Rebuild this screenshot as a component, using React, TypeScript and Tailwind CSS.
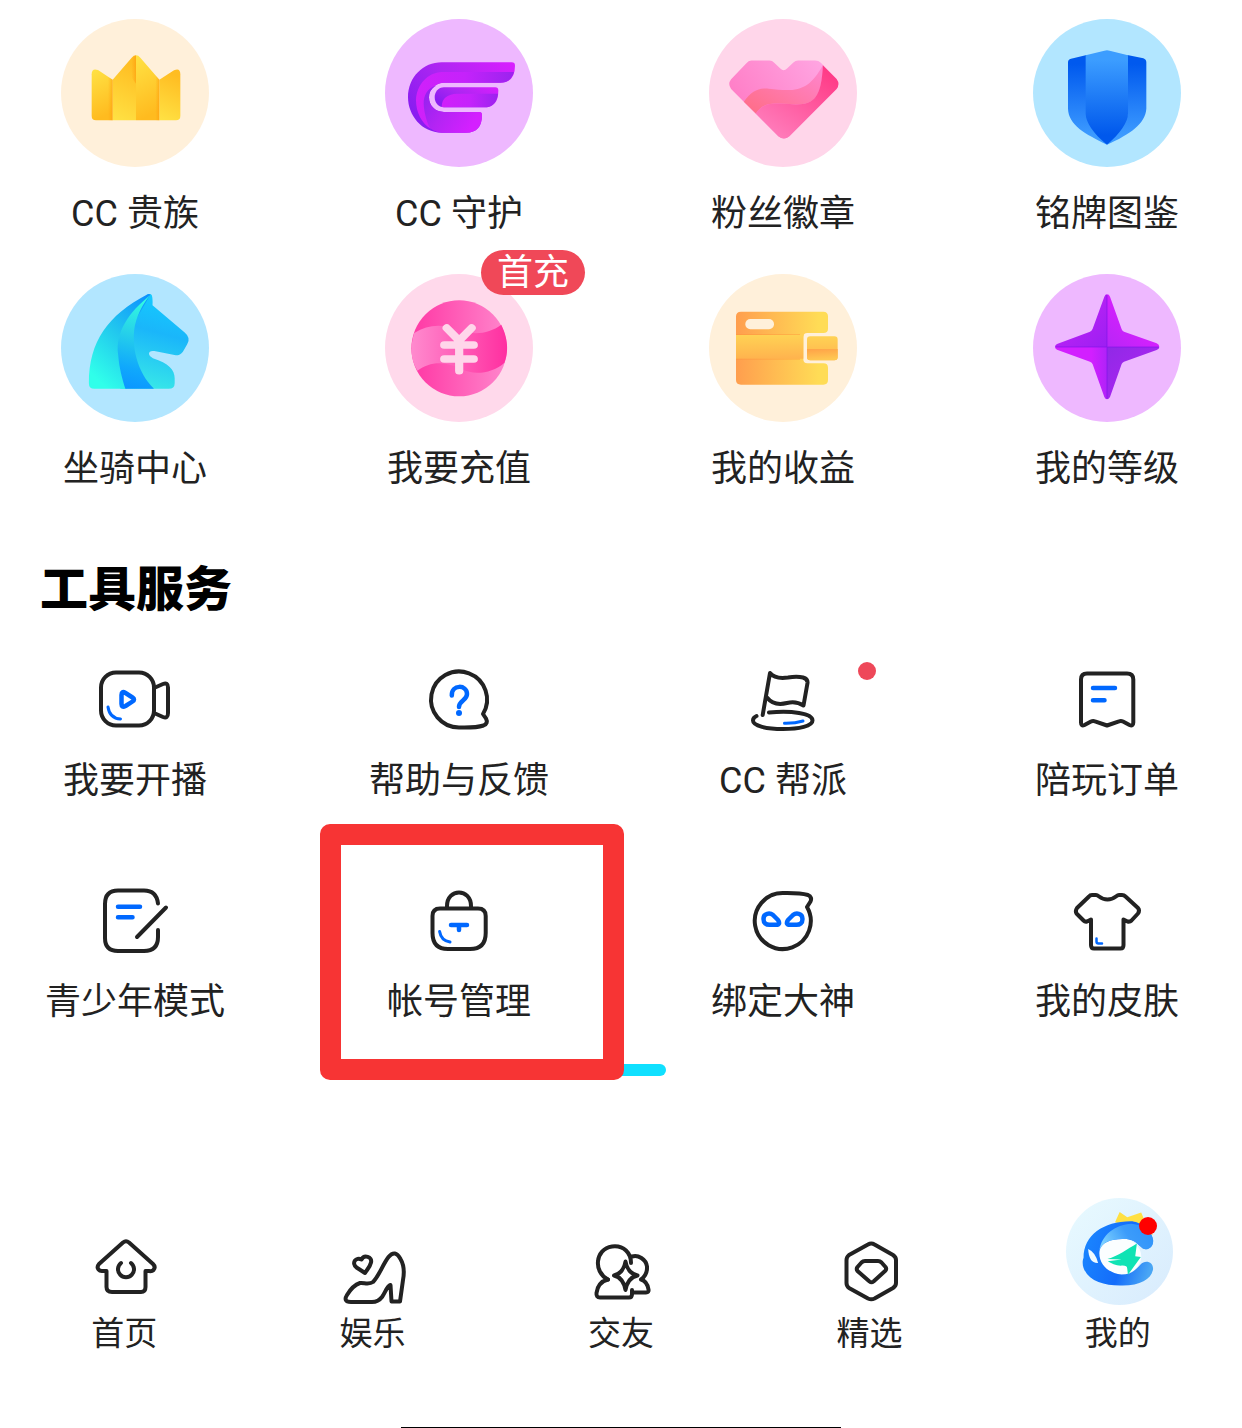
import React from "react";

const INK = "#222222";
const BLUE = "#0068ff";

/* Coloured service icons */

const CrownIcon = () => (
  <svg viewBox="63 56 444 444" className="h-full w-full" aria-hidden="true">
    <defs>
      <linearGradient id="crown-up" x1="0" y1="0" x2="0.2" y2="1">
        <stop offset="0" stopColor="#ffe244" />
        <stop offset="1" stopColor="#ffbb1f" />
      </linearGradient>
      <linearGradient id="crown-down" x1="0.2" y1="0" x2="0" y2="1">
        <stop offset="0" stopColor="#ffbd22" />
        <stop offset="1" stopColor="#ffe244" />
      </linearGradient>
      <linearGradient id="crown-fold" x1="0" y1="0" x2="1" y2="0">
        <stop offset="0" stopColor="#ffa010" stopOpacity="0" />
        <stop offset="1" stopColor="#ff9508" stopOpacity="0.55" />
      </linearGradient>
    </defs>
    <path d="M155 222Q155 202 174 209L218 238V360H168Q155 360 155 347Z" fill="url(#crown-up)" />
    <path d="M218 238L275 172Q281 165 288 165V360H218Z" fill="url(#crown-down)" />
    <path d="M288 165Q295 165 301 172L358 238V360H288Z" fill="url(#crown-up)" />
    <path d="M358 238L402 210Q421 202 421 222V347Q421 360 408 360H358Z" fill="url(#crown-down)" />
    <path d="M204 229L218 238V360H204Z" fill="url(#crown-fold)" />
    <path d="M274 174L288 165V250L274 230Z" fill="url(#crown-fold)" />
    <path d="M346 224L358 238V360H346Z" fill="url(#crown-fold)" />
  </svg>
);

const WingIcon = () => (
  <svg viewBox="1035 56 444 444" className="h-full w-full" aria-hidden="true">
    <defs>
      <linearGradient id="wing-a" x1="0" y1="0.6" x2="1" y2="0">
        <stop offset="0" stopColor="#8a1df0" />
        <stop offset="0.45" stopColor="#ae26f2" />
        <stop offset="1" stopColor="#da1eff" />
      </linearGradient>
      <linearGradient id="wing-b" x1="0" y1="0" x2="1" y2="0">
        <stop offset="0" stopColor="#d020fa" />
        <stop offset="0.5" stopColor="#c522fb" />
        <stop offset="1" stopColor="#9a24ee" />
      </linearGradient>
      <linearGradient id="wing-c" x1="0" y1="0" x2="1" y2="0.5">
        <stop offset="0" stopColor="#8f22ee" />
        <stop offset="0.5" stopColor="#b424f4" />
        <stop offset="1" stopColor="#d420ff" />
      </linearGradient>
    </defs>
    <path
      d="M1205 186H1415Q1425 186 1425 196Q1425 247 1380 247H1212C1183 247 1167 268 1167 291C1167 315 1185 335 1212 335H1318Q1326 335 1326 344Q1326 397 1278 397H1205C1145 397 1104 345 1104 291C1104 230 1150 186 1205 186Z"
      fill="url(#wing-a)"
    />
    <path
      d="M1205 215H1422Q1413 247 1380 247H1212C1175 250 1160 285 1160 310L1172 385C1145 370 1128 335 1128 300C1130 250 1165 217 1205 215Z"
      fill="url(#wing-b)"
    />
    <path
      d="M1188 256C1162 262 1151 285 1151 310C1152 335 1160 365 1170 383Q1188 397 1205 397H1278Q1326 397 1326 344Q1326 335 1318 335H1212C1185 335 1167 315 1167 291Q1167 268 1188 256Z"
      fill="url(#wing-c)"
    />
    <path
      d="M1212 261H1366Q1375 261 1375 271Q1375 321 1332 321H1212C1195 321 1184 307 1184 291C1184 275 1195 261 1212 261Z"
      fill="url(#wing-a)"
    />
    <path d="M1205 320C1205 292 1225 281 1250 280H1374Q1368 321 1332 321H1212Z" fill="url(#wing-b)" />
  </svg>
);

const HeartIcon = () => (
  <svg viewBox="57 56 442 442" className="h-full w-full" aria-hidden="true">
    <defs>
      <linearGradient id="heart-a" x1="0" y1="0.5" x2="1" y2="0">
        <stop offset="0" stopColor="#ff7cc5" />
        <stop offset="1" stopColor="#ffabe6" />
      </linearGradient>
      <linearGradient id="heart-b" x1="0" y1="1" x2="1" y2="0">
        <stop offset="0" stopColor="#ff6c84" />
        <stop offset="1" stopColor="#ff86d0" />
      </linearGradient>
      <linearGradient id="heart-c" x1="1" y1="0" x2="0.2" y2="1">
        <stop offset="0.1" stopColor="#ff3a86" />
        <stop offset="1" stopColor="#ff7fbd" />
      </linearGradient>
    </defs>
    <path
      d="M183 180H238Q246 180 251 186L270 204Q280 214 290 204L309 186Q315 180 323 180H374Q384 180 391 187L438 235Q449 250 438 265L297 406Q281 420 264 406L123 265Q112 250 123 236L168 189Q175 180 183 180Z"
      fill="url(#heart-a)"
    />
    <path
      d="M161 303C185 270 205 262 235 264C320 275 355 270 397 194C395 290 370 312 315 311C240 306 225 303 197 338Z"
      fill="url(#heart-b)"
    />
    <path
      d="M197 338C225 303 240 306 315 311C370 312 393 290 397 194L438 235Q449 250 438 265L297 406Q281 420 264 406Z"
      fill="url(#heart-c)"
    />
  </svg>
);

const ShieldIcon = () => (
  <svg viewBox="1029 56 444 444" className="h-full w-full" aria-hidden="true">
    <defs>
      <linearGradient id="shield-side" x1="0" y1="0" x2="0" y2="1">
        <stop offset="0.1" stopColor="#0059ee" />
        <stop offset="0.9" stopColor="#3d9bff" />
      </linearGradient>
      <linearGradient id="shield-mid" x1="0" y1="0" x2="0" y2="1">
        <stop offset="0.1" stopColor="#3c9dff" />
        <stop offset="0.9" stopColor="#0058ec" />
      </linearGradient>
    </defs>
    <path
      d="M1190 164L1143 175Q1134 177 1134 186V325C1136 375 1185 400 1251 433L1190 345Z"
      fill="url(#shield-side)"
    />
    <path
      d="M1312 164L1360 174Q1369 177 1369 186V325C1366 370 1320 402 1251 433L1312 345Z"
      fill="url(#shield-side)"
    />
    <path
      d="M1187 165L1243 151Q1251 149 1259 151L1314 165V340C1314 365 1290 400 1251 433C1210 400 1187 365 1187 340Z"
      fill="url(#shield-mid)"
    />
  </svg>
);

const HorseIcon = () => (
  <svg viewBox="59 86 414 446" preserveAspectRatio="none" className="h-full w-full" aria-hidden="true">
    <defs>
      <linearGradient id="horse-head" x1="0.6" y1="0" x2="0.4" y2="1">
        <stop offset="0" stopColor="#14ccff" />
        <stop offset="0.4" stopColor="#1ab6fa" />
        <stop offset="1" stopColor="#38e8e8" />
      </linearGradient>
      <linearGradient id="horse-back" x1="0.9" y1="0" x2="0.3" y2="1">
        <stop offset="0" stopColor="#0e92ff" />
        <stop offset="0.5" stopColor="#22c8ee" />
        <stop offset="1" stopColor="#30ffea" />
      </linearGradient>
      <linearGradient id="horse-mane" x1="0.6" y1="0" x2="0.5" y2="1">
        <stop offset="0" stopColor="#32ffe0" />
        <stop offset="0.4" stopColor="#28d4e8" />
        <stop offset="0.8" stopColor="#10a8fc" />
        <stop offset="1" stopColor="#0c98ff" />
      </linearGradient>
    </defs>
    <path
      d="M313 150Q316 160 315 180L405 262Q423 278 412 298L400 320Q393 331 380 331L320 318Q305 316 305 327Q306 335 316 340C360 355 377 375 377 400V415Q377 432 360 432H225V240L300 148Q310 144 313 150Z"
      fill="url(#horse-head)"
    />
    <path
      d="M300 148C190 210 137 290 137 415Q137 432 152 432H245L228 300L309 148Q305 145 300 148Z"
      fill="url(#horse-back)"
    />
    <path
      d="M308 150C250 200 210 260 219 330C222 370 230 400 239 432H319C270 380 255 300 266 240C275 200 290 175 308 150Z"
      fill="url(#horse-mane)"
    />
  </svg>
);

const CoinIcon = () => (
  <svg viewBox="965 86 415 444" preserveAspectRatio="none" className="h-full w-full" aria-hidden="true">
    <defs>
      <linearGradient id="coin-a" x1="0" y1="0" x2="1" y2="0">
        <stop offset="0.1" stopColor="#ff3fa8" />
        <stop offset="1" stopColor="#ff86cc" />
      </linearGradient>
      <linearGradient id="coin-b" x1="0" y1="0" x2="1" y2="0">
        <stop offset="0" stopColor="#ff8ace" />
        <stop offset="1" stopColor="#ff2fa0" />
      </linearGradient>
    </defs>
    <ellipse cx="1173" cy="309" rx="134" ry="144" fill="url(#coin-a)" />
    <path
      d="M1047 263C1090 235 1130 235 1180 258C1225 270 1260 262 1291 238C1315 290 1308 330 1300 352C1265 385 1215 390 1180 372C1130 345 1090 350 1056 376C1035 340 1036 300 1047 263Z"
      fill="url(#coin-b)"
    />
    <path
      d="M1138 248L1173 286L1208 248M1131 299H1214M1131 341H1214M1173 286V376"
      fill="none"
      stroke="#ffd6ea"
      strokeWidth="23"
      strokeLinecap="round"
      strokeLinejoin="round"
    />
  </svg>
);

const WalletIcon = () => (
  <svg viewBox="57 57 444 444" className="h-full w-full" aria-hidden="true">
    <defs>
      <linearGradient id="wallet-a" x1="0" y1="0" x2="1" y2="0">
        <stop offset="0" stopColor="#ff9e4e" />
        <stop offset="0.9" stopColor="#ffdc56" />
      </linearGradient>
      <linearGradient id="wallet-b" x1="0" y1="0" x2="0" y2="1">
        <stop offset="0" stopColor="#ffd254" />
        <stop offset="1" stopColor="#ffb34e" />
      </linearGradient>
      <linearGradient id="wallet-c" x1="0" y1="0" x2="0.2" y2="1">
        <stop offset="0" stopColor="#ffa148" />
        <stop offset="1" stopColor="#ffc852" />
      </linearGradient>
    </defs>
    <path
      d="M153 170H400Q414 170 414 184V222Q414 234 400 234H352Q340 234 340 246V312Q340 325 352 325H400Q414 325 414 338V375Q414 389 400 389H153Q138 389 138 375V184Q138 170 153 170Z"
      fill="url(#wallet-a)"
    />
    <path d="M138 240H341Q340 243 340 246V311H138Z" fill="url(#wallet-b)" />
    <path d="M138 237H330V240H138ZM138 311H330V314H138Z" fill="#ff9238" opacity="0.4" />
    <rect x="166" y="192" width="86" height="31" rx="15" fill="#fff0da" />
    <rect x="351" y="244" width="92" height="72" rx="10" fill="url(#wallet-b)" />
    <path d="M351 282H443V306Q443 316 433 316H361Q351 316 351 306Z" fill="url(#wallet-c)" />
  </svg>
);

const StarIcon = () => (
  <svg viewBox="1029 56 444 444" className="h-full w-full" aria-hidden="true">
    <defs>
      <linearGradient id="star-tl" x1="0" y1="0" x2="1" y2="1">
        <stop offset="0.3" stopColor="#bc22f6" />
        <stop offset="1" stopColor="#9c1ff2" />
      </linearGradient>
      <linearGradient id="star-tr" x1="0" y1="1" x2="1" y2="0">
        <stop offset="0" stopColor="#b626f6" />
        <stop offset="0.6" stopColor="#da1fff" />
      </linearGradient>
      <linearGradient id="star-br" x1="0" y1="0" x2="1" y2="1">
        <stop offset="0" stopColor="#9029e6" />
        <stop offset="0.5" stopColor="#a226ee" />
        <stop offset="1" stopColor="#e01fff" />
      </linearGradient>
      <linearGradient id="star-bl" x1="0" y1="0" x2="1" y2="0">
        <stop offset="0.7" stopColor="#d21fff" />
        <stop offset="1" stopColor="#b022f8" />
      </linearGradient>
    </defs>
    <path
      d="M1251 117Q1246 117 1243 124L1208 220Q1206 226 1200 229L1101 266Q1095 269 1095 275H1251Z"
      fill="url(#star-tl)"
    />
    <path
      d="M1251 117Q1257 117 1260 124L1295 222Q1297 227 1302 229L1400 264Q1408 268 1408 275H1251Z"
      fill="url(#star-tr)"
    />
    <path
      d="M1251 432Q1246 432 1243 425L1208 327Q1206 321 1200 319L1101 283Q1095 280 1095 275H1251Z"
      fill="url(#star-bl)"
    />
    <path
      d="M1251 432Q1256 432 1260 425L1295 326Q1297 321 1302 319L1400 284Q1408 281 1408 275H1251Z"
      fill="url(#star-br)"
    />
    <path d="M1097 275H1406M1251 119V430" stroke="#7c10e8" strokeWidth="3" opacity="0.6" />
  </svg>
);

/* Outline tool icons, drawn on an 84px box */

const ToolSvg = ({ children }: { children: React.ReactNode }) => (
  <svg
    viewBox="0 0 84 84"
    className="h-[84px] w-[84px]"
    fill="none"
    stroke={INK}
    strokeWidth="4"
    strokeLinecap="round"
    strokeLinejoin="round"
    aria-hidden="true"
  >
    {children}
  </svg>
);

const CameraIcon = () => (
  <ToolSvg>
    <rect x="8" y="14.500" width="53" height="53" rx="15" />
    <path d="M61 30L70 26Q75 24 75 29.500V55Q75 61 70 59L61 55" />
    <path
      d="M28.500 37Q28.500 32.500 32.500 35L39.500 39.500Q42.500 41.500 39.500 43.500L32.500 48Q28.500 50 28.500 46Z"
      stroke={BLUE}
      strokeWidth="4.500"
    />
    <path d="M15 49C16 56 20 60.500 27.500 61" stroke={BLUE} strokeWidth="3" />
  </ToolSvg>
);

const HelpIcon = () => (
  <ToolSvg>
    <path d="M66 56A28 28 0 1 0 42 69.500C52 69.800 62 69 66.500 67.500Q71.500 65.500 69 60.500Z" />
    <path d="M34.800 37.500C34.500 26 50 26.500 50 36C50 42.500 42 42.500 42 49" stroke={BLUE} strokeWidth="4.500" />
    <circle cx="42" cy="55" r="3" fill={BLUE} stroke="none" />
  </ToolSvg>
);

const FlagIcon = () => (
  <ToolSvg>
    <path d="M21.700 57L29 15C33 20 40 20.500 47 19.500C53 18.500 58 18.500 62 19.500Q67 21 66.500 25L62.500 47.500C57 44 52 43.500 46 45C38 47 31 46 26 39.500" />
    <path d="M28 54.500C50 52.500 71.500 55 71.500 62.500C71.500 68 58 71 42 71C26 71 12 68 12 62.500Q12 59.500 15.500 58" />
    <path d="M43.500 65.300Q54 65.500 62 63" stroke={BLUE} strokeWidth="3" />
  </ToolSvg>
);

const OrderIcon = () => (
  <ToolSvg>
    <path d="M22 15.500H62Q68.300 15.500 68.300 21.500V64.500Q68.300 68.500 64.500 67L58 63.500Q56 62.500 54 63.300L42 67.500L30 63.300Q28 62.500 26 63.500L19.500 67Q16 68.500 16 64.500V21.500Q16 15.500 22 15.500Z" />
    <path d="M28 30H50M28 42.300H39.500" stroke={BLUE} strokeWidth="4.500" />
  </ToolSvg>
);

const TeenIcon = () => (
  <ToolSvg>
    <path d="M65 24.500C64 16 60 11.500 51 11.500H25Q12 11.500 12 25V59Q12 72 25 72H51Q65 72 65 58V51" />
    <path d="M73 28.500L44 58" />
    <path d="M25 27.700H47M25 38.300H39.500" stroke={BLUE} strokeWidth="4.500" />
  </ToolSvg>
);

const LockIcon = () => (
  <ToolSvg>
    <path d="M23 29.500H61Q68.700 29.500 68.700 37V54Q68.700 70 53 70H31Q15.500 70 15.500 54V37Q15.500 29.500 23 29.500Z" />
    <path d="M30 29V27C30 9 54 9 54 27V29" />
    <path d="M34 46H50M42 46V51" stroke={BLUE} strokeWidth="4.500" />
    <path d="M22.600 52.500Q24 61.500 33 63" stroke={BLUE} strokeWidth="3" />
  </ToolSvg>
);

const MaskIcon = () => (
  <ToolSvg>
    <path d="M66 28A28 28 0 1 1 42 14C52 13.800 62 14.500 67 16Q71.500 18 69.500 22.500Z" />
    <path
      d="M22.500 40C22.500 34 29 33.500 32 36L37 41Q40 45.700 35 45.800H29C25 46 22.500 44 22.500 40ZM61.500 40C61.500 34 55 33.500 52 36L47 41Q44 45.700 49 45.800H55C59 46 61.500 44 61.500 40Z"
      stroke={BLUE}
      strokeWidth="4.500"
    />
  </ToolSvg>
);

const ShirtIcon = () => (
  <ToolSvg>
    <path d="M27 16H31C34 16 35 20.500 42.500 20.500C50 20.500 51 16 54 16H57Q59 16 60.500 17.500L73 29Q75 31.500 73 34.500L66.500 41.500Q65 43 62.500 42.500L58.500 40.500V66Q58.500 69.500 55.500 69.500H29Q26 69.500 26 66V40.500L22 42.500Q20 43 18.500 41.500L11.500 34.500Q10 32 12 29L24 17.500Q25 16 27 16Z" />
    <path d="M31.500 59.500V62.500Q31.500 64.500 33.500 64.500H37" stroke={BLUE} strokeWidth="2.500" />
  </ToolSvg>
);

/* Bottom tab icons, drawn on a 107px box */

const TabSvg = ({ children }: { children: React.ReactNode }) => (
  <svg
    viewBox="0 0 107 107"
    className="h-[107px] w-[107px]"
    fill="none"
    stroke={INK}
    strokeWidth="4"
    strokeLinecap="round"
    strokeLinejoin="round"
    aria-hidden="true"
  >
    {children}
  </svg>
);

const HomeIcon = () => (
  <TabSvg>
    <path d="M52 44.500Q55 42 58 44.500L82 66Q85 69 82.500 72Q81 73.500 78 73H74.500V89Q74.500 94 70 94H41Q35.500 94 35.500 89V73H32Q29 73.500 27.500 71.500Q25.500 69 28 66Z" />
    <path d="M50 65A8 8 0 1 0 60 65" />
  </TabSvg>
);

const HeelIcon = () => (
  <TabSvg>
    <path d="M28 97C31 92 35 87 41 85C45 84.500 50 87 54 84C60 78 64 66 69.500 59C74 53.500 78 54.500 81.500 61C85 67 85.500 74 84 82L81 103.500H72.500L71.500 87C68 88 66.500 94 63 99C60 103 56 104 53 104H32C26 104 25.500 101 28 97Z" />
    <path d="M46 75L37.500 69.500C32 65 37 58.500 42.500 61.500C45 56.500 53.500 58.500 52 64.500C51 69 48 71.500 46 75Z" />
  </TabSvg>
);

const FriendsIcon = () => (
  <TabSvg>
    <path d="M41 81.500C26 74 28 51 45 48.500C57 47 64 55 64 65" />
    <path d="M41 81.500Q31 84 29.500 95Q29 99.500 33 99.500H62Q65 99.500 65 96V92" />
    <path d="M65 58.500C71 56.500 79 61 80 68.500Q80.500 77 74 81.500Q80 83 81.500 91.500Q82 94.500 79 94.500H67" />
    <path d="M58.500 63.500Q60.500 75 70.500 77.500Q60.500 80 58.500 92Q56.500 80 47 77.500Q56.500 75 58.500 63.500Z" fill="#ffffff" />
  </TabSvg>
);

const PicksIcon = () => (
  <TabSvg>
    <path d="M52 46.500Q55.300 44.500 58.500 46.500L77 57Q80 59 80 62V85Q80 88 77 90L58.500 100.500Q55.300 102 52 100.500L33 90Q30.500 88 30.500 85V62Q30.500 59 33 57Z" />
    <path d="M49 63H62Q64 63 65.500 64.500L69.500 69Q71 71 69 73L57.500 83.500Q55.500 85 53.500 83.500L41.500 73Q40 71 41.500 69L45.500 64.500Q47 63 49 63Z" />
  </TabSvg>
);

const MeIcon = () => (
  <svg viewBox="71 54 323 323" className="h-[107px] w-[107px] overflow-visible" aria-hidden="true">
    <defs>
      <linearGradient id="me-bg" x1="0" y1="0" x2="1" y2="1">
        <stop offset="0" stopColor="#e8faff" />
        <stop offset="1" stopColor="#d8ebfd" />
      </linearGradient>
      <linearGradient id="me-ring" x1="0" y1="0.3" x2="1" y2="0.6">
        <stop offset="0" stopColor="#1a86ff" />
        <stop offset="0.6" stopColor="#146cfa" />
        <stop offset="1" stopColor="#4aa6f4" />
      </linearGradient>
      <linearGradient id="me-light" x1="0" y1="0.5" x2="1" y2="0.2">
        <stop offset="0" stopColor="#7cd0ff" />
        <stop offset="0.5" stopColor="#3c9cfa" />
        <stop offset="1" stopColor="#2f92fa" />
      </linearGradient>
    </defs>
    <circle cx="238.500" cy="215.500" r="161.500" fill="url(#me-bg)" />
    <ellipse cx="240" cy="230" rx="64" ry="56" fill="#fbfeff" />
    <path d="M225 127L239 96L262 112L304 98L322 140L340 166L300 150Z" fill="#ffe043" />
    <path
      d="M272 124C190 125 130 165 130 235C127 240 126 255 130 265C145 305 190 318 240 318C300 320 335 300 340 268C340 245 315 240 302 255C285 275 270 285 245 285C200 280 175 250 178 215C182 185 220 175 260 178C285 180 295 195 308 206C325 215 342 200 340 180C335 150 300 124 272 124Z"
      fill="url(#me-ring)"
    />
    <path
      d="M178 212C185 165 225 135 275 132C310 135 338 155 340 182C342 200 325 215 308 206C295 195 285 180 260 178C220 175 185 185 178 212Z"
      fill="url(#me-light)"
    />
    <path d="M144 208Q166 218 174 250Q146 252 144 208Z" fill="#f0fbff" />
    <path
      d="M291 191L286 230L303 232L264 286L262 268Q262 258 248 258C230 260 215 252 203 245L245 240L202 238C235 228 262 208 291 191Z"
      fill="#0fe3b4"
    />
  </svg>
);

type Service = {
  label: string;
  tint: string;
  Icon: () => React.ReactElement;
  badge?: string;
};

const services: Service[] = [
  { label: "CC 贵族", tint: "bg-[#fff0da]", Icon: CrownIcon },
  { label: "CC 守护", tint: "bg-[#eeb8ff]", Icon: WingIcon },
  { label: "粉丝徽章", tint: "bg-[#ffd6ea]", Icon: HeartIcon },
  { label: "铭牌图鉴", tint: "bg-[#b2e6ff]", Icon: ShieldIcon },
  { label: "坐骑中心", tint: "bg-[#b2e6ff]", Icon: HorseIcon },
  { label: "我要充值", tint: "bg-[#ffd9eb]", Icon: CoinIcon, badge: "首充" },
  { label: "我的收益", tint: "bg-[#fff0da]", Icon: WalletIcon },
  { label: "我的等级", tint: "bg-[#eeb8ff]", Icon: StarIcon },
];

type Tool = {
  label: string;
  Icon: () => React.ReactElement;
  dot?: boolean;
  marked?: boolean;
};

const tools: Tool[] = [
  { label: "我要开播", Icon: CameraIcon },
  { label: "帮助与反馈", Icon: HelpIcon },
  { label: "CC 帮派", Icon: FlagIcon, dot: true },
  { label: "陪玩订单", Icon: OrderIcon },
  { label: "青少年模式", Icon: TeenIcon },
  { label: "帐号管理", Icon: LockIcon, marked: true },
  { label: "绑定大神", Icon: MaskIcon },
  { label: "我的皮肤", Icon: ShirtIcon },
];

const tabs = [
  { label: "首页", Icon: HomeIcon },
  { label: "娱乐", Icon: HeelIcon },
  { label: "交友", Icon: FriendsIcon },
  { label: "精选", Icon: PicksIcon },
  { label: "我的", Icon: MeIcon, dot: true },
];

const App = () => {
  return (
    <div className="overflow-x-hidden bg-white font-['Roboto','Noto_Sans_CJK_SC',sans-serif] text-[#222222]">
      <main className="px-10 pt-[19px]">
        {/* Services */}
        <section className="grid grid-cols-4 gap-x-[134px] gap-y-9">
          {services.map(({ label, tint, Icon, badge }) => (
            <button key={label} type="button" className="flex flex-col items-center">
              <span className={`relative block h-[148px] w-[148px] rounded-full ${tint}`}>
                <Icon />
                {badge && (
                  <span className="absolute -top-6 left-24 flex h-[45px] items-center rounded-full bg-[#f04858] px-4 text-4xl whitespace-nowrap text-white">
                    {badge}
                  </span>
                )}
              </span>
              <span className="mt-6 text-4xl leading-[47px] whitespace-nowrap">{label}</span>
            </button>
          ))}
        </section>

        {/* Tools */}
        <section className="mt-[69px]">
          <h2 className="text-5xl leading-[56px] font-black text-black">工具服务</h2>
          <div className="mt-10 grid grid-cols-4 gap-x-[134px] gap-y-[74px]">
            {tools.map(({ label, Icon, dot, marked }) => (
              <button key={label} type="button" className="relative flex flex-col items-center">
                <Icon />
                <span className="mt-4 text-4xl leading-[47px] whitespace-nowrap">{label}</span>
                {dot && (
                  <span className="absolute top-1 right-0.5 h-[18px] w-[18px] rounded-full bg-[#ee4859]" />
                )}
                {marked && (
                  <span className="absolute -top-[55px] -right-[70px] -bottom-[54px] -left-11 z-10 rounded-[10px] border-[21px] border-[#f73434]" />
                )}
              </button>
            ))}
          </div>
        </section>

        {/* Page indicator */}
        <div className="mx-auto mt-[38px] h-3 w-[90px] rounded-full bg-[#10e0ff]" />
      </main>

      {/* Bottom tabs */}
      <nav className="mt-[122px] grid grid-cols-5 pb-[69px]">
        {tabs.map(({ label, Icon, dot }) => (
          <a key={label} href="#" className="flex flex-col items-center">
            <span className="relative">
              <Icon />
              {dot && (
                <span className="absolute top-[19px] right-3.5 h-[18px] w-[18px] rounded-full bg-[#ff0000]" />
              )}
            </span>
            <span className="mt-[5px] text-[33px] leading-[48px]">{label}</span>
          </a>
        ))}
      </nav>

      {/* Home bar */}
      <div className="mx-auto h-px w-[440px] bg-black" />
    </div>
  );
};

export default App;
